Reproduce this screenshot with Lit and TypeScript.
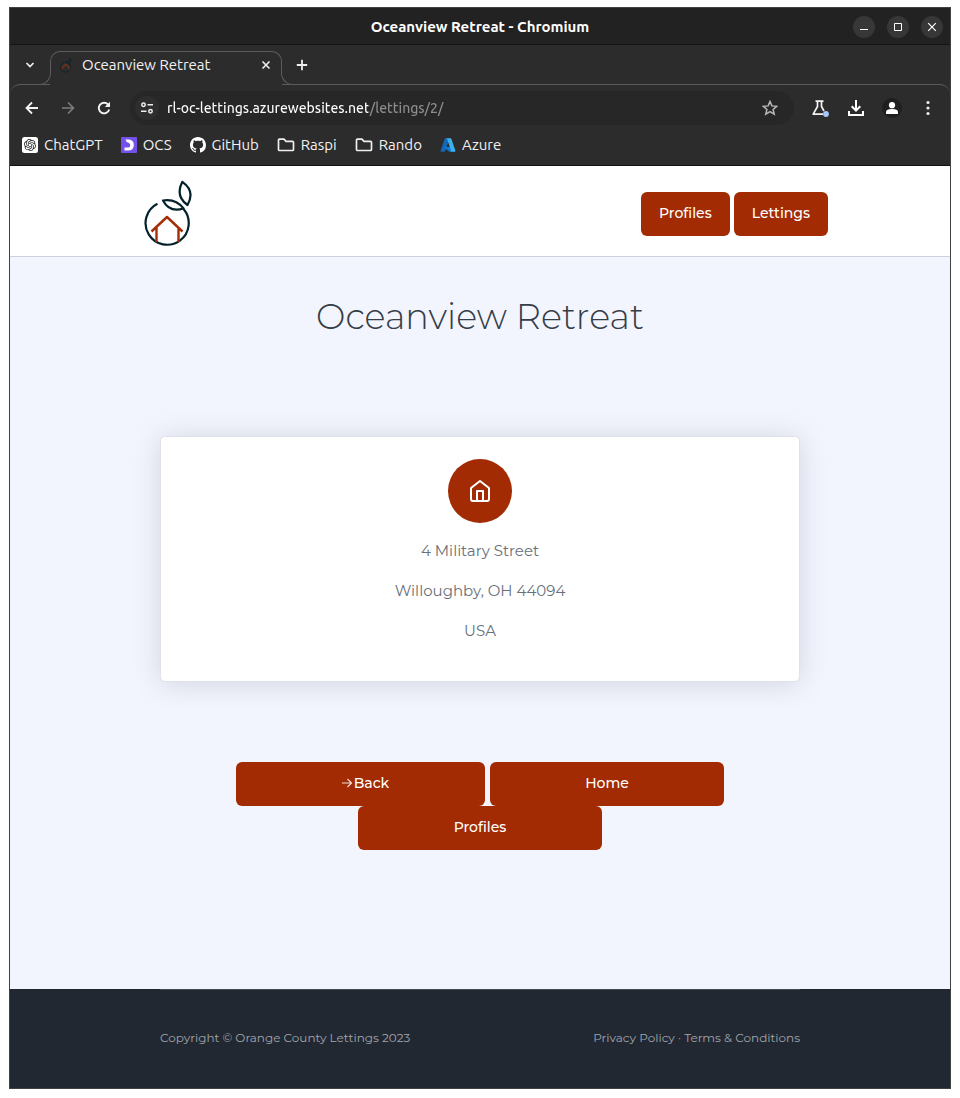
import { LitElement, html, svg, css } from "lit";
import { customElement } from "lit/decorators.js";

const logo = svg`
  <g fill="none" stroke-width="2.200" stroke-linecap="butt" stroke-linejoin="round">
    <path d="M13.500 24.800A21.600 21.600 0 1 0 39.500 30" stroke="#04212b" />
    <path d="M19 21.500Q32 19.500 39.500 29.500Q25.500 34 19 21.500Z" stroke="#04212b" />
    <path d="M38.300 2.800Q51.500 12 43.500 26Q31 17 38.300 2.800Z" stroke="#04212b" />
    <path d="M7.500 52.500L23 38L38.500 52.500M12.500 48V63M34.500 48V63" stroke="#a72d06" stroke-width="2.400" />
  </g>`;

@customElement("browser-chrome")
export class BrowserChrome extends LitElement {
  static styles = css`
    :host {
      display: block;
      background: #2c2c2c;
      color: #f2f2f2;
      font-family: "Ubuntu", "Noto Sans", sans-serif;
      font-size: 15px;
      line-height: 20px;
      border-bottom: 1px solid #111;
    }
    button {
      display: grid;
      place-items: center;
      padding: 0;
      border: 0;
      background: none;
      color: inherit;
      width: 24px;
      height: 24px;
    }
    svg { display: block; }
    .title-bar {
      display: grid;
      grid-template-columns: 1fr auto 1fr;
      align-items: center;
      box-sizing: border-box;
      height: 37px;
      padding-top: 1px;
      background: #222;
      border-bottom: 1px solid #151515;
      font-weight: 700;
      color: #fff;
    }
    .window-buttons {
      grid-column: 3;
      display: flex;
      justify-content: flex-end;
      gap: 12px;
      padding-right: 7px;
    }
    .window-title { grid-column: 2; }
    .window-buttons button {
      width: 22px;
      height: 22px;
      border-radius: 50%;
      background: #373737;
    }
    .tab-strip {
      display: flex;
      align-items: center;
      height: 40px;
      padding-left: 8px;
    }
    .curve {
      z-index: 2;
      align-self: flex-end;
      width: 12px;
      height: 12px;
      box-sizing: border-box;
      background: #2c2c2c;
      border-bottom: 1px solid #5c5c5c;
    }
    .curve.left {
      margin-left: -3px;
      border-right: 1px solid #5c5c5c;
      border-bottom-right-radius: 12px;
    }
    .curve.right {
      border-left: 1px solid #5c5c5c;
      border-bottom-left-radius: 12px;
      margin-right: -3px;
    }
    .tab {
      position: relative;
      z-index: 1;
      align-self: flex-end;
      display: flex;
      align-items: center;
      gap: 8px;
      box-sizing: border-box;
      flex: 0 1 232px;
      height: 34px;
      margin: 0 -1px;
      padding: 0 4px 6px 9px;
      background: #2c2c2c;
      border-radius: 10px 10px 0 0;
    }
    .tab::before {
      content: "";
      position: absolute;
      inset: 0 0 11px;
      border: 1px solid #5c5c5c;
      border-bottom: 0;
      border-radius: 10px 10px 0 0;
      pointer-events: none;
    }
    .tab-title { flex: 1; white-space: nowrap; }
    .toolbar {
      display: flex;
      align-items: center;
      gap: 12px;
      margin-top: -1px;
      padding: 6px 10px 0;
      border-top: 1px solid #5c5c5c;
      border-radius: 10px 10px 0 0;
    }
    .omnibox {
      flex: 1;
      display: flex;
      align-items: center;
      gap: 8px;
      margin: 0 2px;
      padding: 0 12px 0 5px;
      height: 34px;
      border-radius: 17px;
      background: #272727;
    }
    .site-info {
      border-radius: 50%;
      background: #2e2e2e;
    }
    .omnibox input {
      flex: 1;
      min-width: 0;
      padding: 0;
      border: 0;
      outline: 0;
      font: inherit;
      font-size: 14px;
      font-weight: 500;
      color: transparent;
      background: linear-gradient(90deg, #fff 201px, #8d8d8d 201px);
      -webkit-background-clip: text;
      background-clip: text;
    }
    .omnibox .star { color: #b8b8b8; }
    .forward { color: #7d7d7d; }
    .bookmarks {
      display: flex;
      align-items: center;
      gap: 18px;
      height: 40px;
      padding: 0 12px;
      box-sizing: border-box;
    }
    .bookmarks a {
      display: flex;
      align-items: center;
      gap: 6px;
      color: inherit;
      text-decoration: none;
    }
  `;

  private folder() {
    return html`<svg width="18" height="16" viewBox="0 0 18 16" fill="none" stroke="#eee" stroke-width="1.700" stroke-linejoin="round"><path d="M1.500 3.200Q1.500 2.200 2.500 2.200H7L9 4.300H15.500Q16.500 4.300 16.500 5.300V12.500Q16.500 13.500 15.500 13.500H2.500Q1.500 13.500 1.500 12.500Z" /></svg>`;
  }

  render() {
    return html`
      <div class="title-bar">
        <span class="window-title">Oceanview Retreat - Chromium</span>
        <div class="window-buttons">
          <button aria-label="Minimize"><svg width="10" height="10" viewBox="0 0 10 10"><path d="M1 7.500H9" stroke="#fff" /></svg></button>
          <button aria-label="Maximize"><svg width="10" height="10" viewBox="0 0 10 10"><path d="M1.500 1.500H8.500V8.500H1.500Z" fill="none" stroke="#fff" /></svg></button>
          <button aria-label="Close window"><svg width="10" height="10" viewBox="0 0 10 10"><path d="M1.200 1.200L8.800 8.800M8.800 1.200L1.200 8.800" stroke="#fff" stroke-width="1.200" /></svg></button>
        </div>
      </div>
      <div class="tab-strip">
        <button aria-label="Search tabs"><svg width="10" height="10" viewBox="0 0 10 10"><path d="M1.500 3L5 6.500L8.500 3" fill="none" stroke="#eee" stroke-width="1.700" /></svg></button>
        <span class="curve left"></span>
        <div class="tab">
          <svg width="15" height="16" viewBox="0 0 15 16" fill="none" stroke="#15262d"><path d="M5 5.200A5 5 0 1 0 9.500 6" stroke-width="1.200" /><path d="M6 4.800Q9 4 11 6.500Q8 7.500 6 4.800ZM10.500 .800Q13 3 11.500 5.500Q9 3.500 10.500 .800Z" fill="#15262d" /><path d="M3.500 12.200V10.200L6.800 7.500L10 10.200V12.200" stroke="#71301b" stroke-width="1.500" /></svg>
          <span class="tab-title">Oceanview Retreat</span>
          <button aria-label="Close tab"><svg width="10" height="10" viewBox="0 0 10 10"><path d="M1.500 1.500L8.500 8.500M8.500 1.500L1.500 8.500" stroke="#eee" stroke-width="1.600" /></svg></button>
        </div>
        <span class="curve right"></span>
        <button aria-label="New tab"><svg width="12" height="12" viewBox="0 0 12 12"><path d="M6 .800V11.200M.800 6H11.200" stroke="#eee" stroke-width="1.800" /></svg></button>
      </div>
      <div class="toolbar">
        <button aria-label="Back"><svg width="14" height="14" viewBox="0 0 14 14"><path d="M13 7H2M7 1.500L1.500 7L7 12.500" fill="none" stroke="#f2f2f2" stroke-width="1.800" /></svg></button>
        <button class="forward" aria-label="Forward"><svg width="14" height="14" viewBox="0 0 14 14"><path d="M1 7H12M7 1.500L12.500 7L7 12.500" fill="none" stroke="currentColor" stroke-width="1.600" /></svg></button>
        <button aria-label="Reload"><svg width="14" height="14" viewBox="0 0 14 14"><path d="M12.200 8.500A5.300 5.300 0 1 1 11 3.500" fill="none" stroke="#f2f2f2" stroke-width="1.900" /><path d="M13 .800V6H7.800Z" fill="#f2f2f2" /></svg></button>
        <div class="omnibox">
          <button class="site-info" aria-label="Site information"><svg width="14" height="12" viewBox="0 0 14 12" fill="none" stroke="#eee" stroke-width="1.500"><circle cx="3.500" cy="2.700" r="1.700" /><path d="M7.500 2.700H13M1 9.300H6.500" /><circle cx="10.500" cy="9.300" r="1.700" /></svg></button>
          <input aria-label="Address" value="rl-oc-lettings.azurewebsites.net/lettings/2/" />
          <button class="star" aria-label="Bookmark this page"><svg width="16" height="16" viewBox="0 0 16 16"><path d="M8 1.500L9.900 5.900L14.700 6.300L11.100 9.500L12.200 14.200L8 11.700L3.800 14.200L4.900 9.500L1.300 6.300L6.100 5.900Z" fill="none" stroke="currentColor" stroke-width="1.500" /></svg></button>
        </div>
        <button aria-label="Labs"><svg width="18" height="18" viewBox="0 0 18 18"><path d="M4.500 2.200H12.500M6.500 2.500V7.500L2.200 15.200H12M10.500 2.500V7.500L13 12" fill="none" stroke="#f2f2f2" stroke-width="1.700" stroke-linejoin="round" /><circle cx="15" cy="15" r="2.900" fill="#a8c7fa" /></svg></button>
        <button aria-label="Downloads"><svg width="16" height="16" viewBox="0 0 16 16" fill="none" stroke="#fff" stroke-width="2"><path d="M8 0V10.500M3.700 6.300L8 10.600L12.300 6.300M1 11V15H15V11" /></svg></button>
        <button aria-label="Profile"><svg width="20" height="20" viewBox="0 0 20 20"><circle cx="10" cy="10" r="10" fill="#1d1f20" /><circle cx="10" cy="7.200" r="3.100" fill="#fff" /><path d="M4 16V14Q4 11 10 11T16 14V16Z" fill="#fff" /></svg></button>
        <button aria-label="Menu"><svg width="4" height="16" viewBox="0 0 4 16" fill="#eee"><circle cx="2" cy="2.500" r="1.600" /><circle cx="2" cy="8" r="1.600" /><circle cx="2" cy="13.500" r="1.600" /></svg></button>
      </div>
      <nav class="bookmarks" aria-label="Bookmarks">
        <a href="#"><svg width="16" height="16" viewBox="0 0 16 16"><rect width="16" height="16" rx="2.500" fill="#fff" /><path transform="translate(2 2) scale(.5)" fill="#222" d="M22.2819 9.8211a5.9847 5.9847 0 0 0-.5157-4.9108 6.0462 6.0462 0 0 0-6.5098-2.9A6.0651 6.0651 0 0 0 4.9807 4.1818a5.9847 5.9847 0 0 0-3.9977 2.9 6.0462 6.0462 0 0 0 .7427 7.0966 5.98 5.98 0 0 0 .511 4.9107 6.051 6.051 0 0 0 6.5146 2.9001A5.9847 5.9847 0 0 0 13.2599 24a6.0557 6.0557 0 0 0 5.7718-4.2058 5.9894 5.9894 0 0 0 3.9977-2.9001 6.0557 6.0557 0 0 0-.7475-7.0729zm-9.022 12.6081a4.4755 4.4755 0 0 1-2.8764-1.0408l.1419-.0804 4.7783-2.7582a.7948.7948 0 0 0 .3927-.6813v-6.7369l2.02 1.1686a.071.071 0 0 1 .038.052v5.5826a4.504 4.504 0 0 1-4.4945 4.4944zm-9.6607-4.1254a4.4708 4.4708 0 0 1-.5346-3.0137l.142.0852 4.783 2.7582a.7712.7712 0 0 0 .7806 0l5.8428-3.3685v2.3324a.0804.0804 0 0 1-.0332.0615L9.74 19.9502a4.4992 4.4992 0 0 1-6.1408-1.6464zM2.3408 7.8956a4.485 4.485 0 0 1 2.3655-1.9728V11.6a.7664.7664 0 0 0 .3879.6765l5.8144 3.3543-2.0201 1.1685a.0757.0757 0 0 1-.071 0l-4.8303-2.7865A4.504 4.504 0 0 1 2.3408 7.872zm16.5963 3.8558L13.1038 8.364 15.1192 7.2a.0757.0757 0 0 1 .071 0l4.8303 2.7913a4.4944 4.4944 0 0 1-.6765 8.1042v-5.6772a.79.79 0 0 0-.407-.667zm2.0107-3.0231l-.142-.0852-4.7735-2.7818a.7759.7759 0 0 0-.7854 0L9.409 9.2297V6.8974a.0662.0662 0 0 1 .0284-.0615l4.8303-2.7866a4.4992 4.4992 0 0 1 6.6802 4.66zM8.3065 12.863l-2.02-1.1638a.0804.0804 0 0 1-.038-.0567V6.0742a4.4992 4.4992 0 0 1 7.3757-3.4537l-.142.0805L8.704 5.459a.7948.7948 0 0 0-.3927.6813zm1.0976-2.3654l2.602-1.4998 2.6069 1.4998v2.9994l-2.5974 1.4997-2.6067-1.4997Z" /></svg>ChatGPT</a>
        <a href="#"><svg width="16" height="16" viewBox="0 0 16 16"><rect width="16" height="16" rx="1" fill="#7451eb" /><path d="M4.500 2.500H7Q12.800 2.500 12.800 8T7 13.500H3.500V10.600H6.500Q9.300 10.600 9.300 8Q9.300 6 7 5.500Q5 5 4.500 2.500Z" fill="#fff" /></svg>OCS</a>
        <a href="#"><svg width="16" height="16" viewBox="0 0 16 16" fill="#fff"><path d="M8 0C3.58 0 0 3.58 0 8c0 3.54 2.290 6.530 5.470 7.590.4.070.550-.170.550-.380 0-.190-.010-.820-.010-1.490-2.010.370-2.530-.490-2.690-.940-.090-.230-.480-.940-.820-1.130-.280-.150-.680-.520-.010-.530.630-.010 1.080.580 1.230.820.720 1.210 1.870.870 2.330.660.070-.520.280-.870.510-1.070-1.780-.2-3.640-.890-3.640-3.950 0-.870.310-1.590.820-2.150-.080-.2-.360-1.020.080-2.120 0 0 .670-.210 2.200.820.640-.180 1.320-.270 2-.270s1.360.090 2 .270c1.530-1.040 2.200-.820 2.200-.820.440 1.100.160 1.920.080 2.120.510.560.820 1.270.820 2.150 0 3.070-1.870 3.750-3.650 3.950.290.250.540.730.540 1.480 0 1.070-.010 1.930-.010 2.200 0 .210.150.460.550.380A8.010 8.010 0 0 0 16 8c0-4.420-3.580-8-8-8" /></svg>GitHub</a>
        <a href="#">${this.folder()}Raspi</a>
        <a href="#">${this.folder()}Rando</a>
        <a href="#"><svg width="16" height="16" viewBox="0 0 16 16"><path d="M5.400 1.300H9.600L5.200 13.900Q4.900 14.700 4.100 14.700H1.200Q.300 14.700 .600 13.800L4.600 1.900Q4.800 1.300 5.400 1.300Z" fill="#1369b8" /><path d="M5 10H11.500L12.500 14.700H9.300L4.600 10.800Q4.300 10.100 5 10Z" fill="#0f78d4" /><path d="M6.500 1.300H10.500Q11.200 1.300 11.400 2L15.400 13.800Q15.600 14.700 14.700 14.700H10.400Q11.300 14.500 11 13.700L7.300 2.400Q7.100 1.600 6.500 1.300Z" fill="#38b1ee" /></svg>Azure</a>
      </nav>
    `;
  }
}

@customElement("letting-page")
export class LettingPage extends LitElement {
  static styles = css`
    :host {
      display: flex;
      flex-direction: column;
      flex: 1;
      background: #f2f5fe;
      color: #69707a;
      font-family: "Metropolis", "Montserrat", "Inter", sans-serif;
      font-size: 15px;
      line-height: 24px;
    }
    svg { display: block; }
    .site-header {
      background: #fff;
      border-bottom: 1px solid #cbd1de;
    }
    .header-inner {
      display: flex;
      justify-content: space-between;
      align-items: center;
      box-sizing: border-box;
      max-width: 720px;
      height: 90px;
      margin: 0 auto;
      padding: 4px 12px 0;
    }
    .logo { padding-left: 12px; }
    .links { display: flex; gap: 4px; padding-top: 2px; }
    .btn {
      display: flex;
      align-items: center;
      justify-content: center;
      box-sizing: border-box;
      height: 44px;
      padding: 0 18px 2px;
      border-radius: 6px;
      background: #a22b03;
      color: #fff;
      font-size: 14px;
      font-weight: 500;
      line-height: 20px;
      text-decoration: none;
      white-space: nowrap;
    }
    main {
      flex: 1;
      padding: 36px 24px 139px;
      text-align: center;
    }
    h1 {
      margin: 0 0 95px;
      color: #363d47;
      font-size: 35px;
      line-height: 48px;
      font-weight: 300;
    }
    .card {
      box-sizing: border-box;
      max-width: 640px;
      margin: 0 auto 80px;
      padding: 22px 24px 22px;
      background: #fff;
      border: 1px solid #dfe2ea;
      border-radius: 5px;
      box-shadow: 0 2px 28px rgba(33, 40, 50, 0.15);
    }
    .badge {
      display: grid;
      place-items: center;
      width: 64px;
      height: 64px;
      margin: 0 auto 16px;
      border-radius: 50%;
      background: #a22b03;
    }
    .card p { margin: 0 0 16px; }
    .actions {
      display: flex;
      flex-wrap: wrap;
      justify-content: center;
      column-gap: 5px;
      max-width: 640px;
      margin: 0 auto;
    }
    .actions .btn { flex: 0 1 244px; }
    .actions .btn.back { flex-basis: 249px; padding-left: 28px; }
    .actions .btn.home { flex-basis: 234px; }
    footer {
      background: #212832;
      padding: 0 24px;
      color: #a2a5ab;
      font-size: 12px;
      line-height: 18px;
    }
    .footer-inner {
      display: flex;
      justify-content: space-between;
      flex-wrap: wrap;
      max-width: 640px;
      margin: 0 auto;
      padding: 39px 0 41px;
      border-top: 1px solid #454b53;
    }
    footer a { color: inherit; text-decoration: none; }
  `;

  render() {
    return html`
      <header class="site-header">
        <div class="header-inner">
          <a class="logo" href="#" aria-label="Orange County Lettings"><svg width="48" height="68" viewBox="0 0 48 68">${logo}</svg></a>
          <nav class="links">
            <a class="btn" href="#">Profiles</a>
            <a class="btn" href="#">Lettings</a>
          </nav>
        </div>
      </header>
      <main>
        <h1>Oceanview Retreat</h1>
        <section class="card">
          <div class="badge"><svg width="24" height="24" viewBox="0 0 24 24" fill="none" stroke="#fff" stroke-width="2" stroke-linejoin="round"><path d="M3 9L12 2L21 9V20Q21 22 19 22H5Q3 22 3 20Z" /><path d="M9 22V12H15V22" /></svg></div>
          <p>4 Military Street</p>
          <p>Willoughby, OH 44094</p>
          <p>USA</p>
        </section>
        <div class="actions">
          <a class="btn back" href="#"><svg width="12" height="12" viewBox="0 0 12 12" fill="none" stroke="#f3dcd4" stroke-width="1.200"><path d="M0 6H9.500M5.500 2L9.500 6L5.500 10" /></svg>Back</a>
          <a class="btn home" href="#">Home</a>
          <a class="btn" href="#">Profiles</a>
        </div>
      </main>
      <footer>
        <div class="footer-inner">
          <span>Copyright © Orange County Lettings 2023</span>
          <span><a href="#">Privacy Policy</a> · <a href="#">Terms &amp; Conditions</a></span>
        </div>
      </footer>
    `;
  }
}

@customElement("app-root")
export class AppRoot extends LitElement {
  static styles = css`
    :host {
      display: flex;
      flex-direction: column;
      box-sizing: border-box;
      min-height: 100vh;
      padding: 7px 9px 9px;
      background: #fff;
    }
    .window {
      flex: 1;
      display: flex;
      flex-direction: column;
      border: 1px solid #414141;
    }
  `;

  render() {
    return html`<div class="window"><browser-chrome></browser-chrome><letting-page></letting-page></div>`;
  }
}
